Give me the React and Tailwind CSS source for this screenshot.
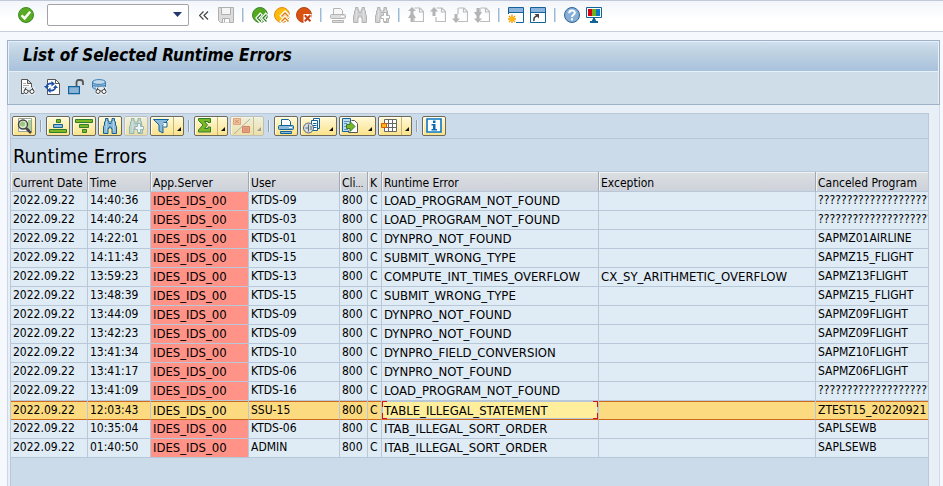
import React from "react";

function Svg({ children, className = "", w = 16 }) {
  return (
    <svg aria-hidden="true" width={w} height="16" viewBox={`0 0 ${w} 16`} fill="none" className={`shrink-0 ${className}`}>
      {children}
    </svg>
  );
}

/* ---------- system toolbar icons ---------- */
const Accept = () => (
  <Svg>
    <circle cx="8" cy="8" r="7.5" fill="#58ab22" stroke="#3d8a2a" />
    <path d="M3.6 8.2l3 3.2 5.6-6.6" stroke="#fff" strokeWidth="2.4" />
  </Svg>
);
const Save = () => (
  <Svg>
    <path d="M.5.5h15v15H2.5l-2-2z" fill="#dcdcdc" stroke="#b0b0b0" />
    <path d="M3.5.5h9v7h-9z" fill="#f4f4f4" stroke="#b0b0b0" />
    <path d="M4.500 15.500v-4h7v4" fill="#fff" stroke="#b0b0b0" />
    <path d="M6.500 12v3" stroke="#b0b0b0" />
  </Svg>
);
const Back = () => (
  <Svg>
    <circle cx="8" cy="8" r="7.5" fill="#55a81e" stroke="#3b8a34" />
    <path d="M9.5 6.5l-4 4.5 4 4.5M15 6.5L11 11l4 4.5" stroke="#fff" strokeWidth="3.6" />
    <path d="M9 7.500l-3.500 3.500L9 14.500M14.500 7.500L11 11l3.500 3.500" stroke="#2e7d32" strokeWidth="1.300" />
  </Svg>
);
const Exit = () => (
  <Svg>
    <circle cx="8" cy="8" r="7.5" fill="#fbbc0c" stroke="#e08a1c" />
    <path d="M6.500 10l4.500-4.500L15.500 10M6.500 15.500L11 11l4.500 4.500" stroke="#fff" strokeWidth="3.4" />
    <path d="M7.500 9.500L11 6l3.500 3.500M7.500 14.500L11 11l3.500 3.500" stroke="#d97a14" strokeWidth="1.4" />
  </Svg>
);
const Cancel = () => (
  <Svg>
    <circle cx="8" cy="8" r="7.500" fill="#d9530f" stroke="#b5451b" />
    <path d="M7.500 7h8v9h-8z" fill="#fff" />
    <path d="M8.800 8.300l5.600 6M14.400 8.300l-5.600 6" stroke="#c8401a" strokeWidth="2" />
  </Svg>
);
const Printer = ({ line = "#b4b4b4", body = "#dcdcdc", paper = "#f8f8f8" }) => (
  <Svg>
    <path d="M3.500 7V1.500h7l2 2V7" fill={paper} stroke={line} />
    <rect x=".5" y="7.500" width="15" height="4" rx="1" fill={body} stroke={line} />
    <path d="M11 9.500h3" stroke="#fff" />
    <path d="M2.500 13.500h11v2h-11z" fill={body} stroke={line} />
  </Svg>
);
const Binoculars = ({ line = "#b4b4b4", body = "#d2d2d2", plus }) => (
  <Svg>
    <path
      d="M3.500.5h2.500v2.500h1V5.500h2V3h1V.5h2.500V3l1 1v3l1 1.500v7H10v-5H9V9H7v1.500H6v5H1.500v-7L2.500 7V4l1-1z"
      fill={body}
      stroke={line}
    />
    <path d="M4.500 3v10M11.500 3v10" stroke="#fff" strokeOpacity=".35" />
    {plus && <path d="M9.500 5.500h3v3h3v3h-3v3h-3v-3h-2.500v-3h2.500z" fill="#fff" stroke={line} />}
  </Svg>
);
const Page = ({ first, up, down, last }) => (
  <Svg>
    <path d="M6.500 1H12l3.500 3.500V14.500H6M11.500 1v4h4" stroke="#bcbcbc" strokeWidth="1.200" />
    {(down || last) && <path d="M6 1v6" stroke="#bcbcbc" strokeWidth="1.200" />}
    {(up || first) && <path d="M6 10v5" stroke="#bcbcbc" strokeWidth="1.200" />}
    {up && <path d="M4 0l4 4.500H5.500V9h-3V4.500H0z" fill="#b4b4b4" />}
    {down && <path d="M4 16l4-4.500H5.500V7h-3v4.500H0z" fill="#b4b4b4" />}
    {first && <path d="M4 0l4 4H5.500v3L8 11H5.500v4h-3v-4H0l2.500-4V4H0z" fill="#b4b4b4" />}
    {last && <path d="M4 16l4-4.500H5.500V9L8 5H5.500V1h-3v4H0l2.500 4v2.500H0z" fill="#b4b4b4" />}
  </Svg>
);
const NewSession = () => (
  <Svg>
    <path d="M.5.5h15v15h-15z" fill="#fff" stroke="#11639a" strokeWidth="1" />
    <path d="M1 1h14v4H1z" fill="#8db4dc" />
    <path d="M0 5.500h16" stroke="#11639a" />
    <path d="M0 7h8v9H0z" fill="#fff" />
    <path d="M4 7.500v8.500M0 12h8M1 9l6 6M7 9l-6 6" stroke="#f59a00" strokeWidth="1.400" />
    <circle cx="4" cy="12" r="2.300" fill="#fcb813" />
  </Svg>
);
const Shortcut = () => (
  <Svg>
    <path d="M.5.5h15v15h-15z" fill="#fff" stroke="#11639a" />
    <path d="M1 1h14v4H1z" fill="#8db4dc" />
    <path d="M0 5.500h16" stroke="#11639a" />
    <path d="M4 14c-.5-3 .5-4.500 3-5" stroke="#444" strokeWidth="1.600" />
    <path d="M4.500 7H9v4.500z" fill="#444" />
  </Svg>
);
const Help = () => (
  <Svg>
    <circle cx="8" cy="8" r="7.500" fill="#86aed6" stroke="#2a6596" />
    <path d="M5.200 6.200c0-3.600 5.600-3.600 5.600-.4 0 2-2.800 2-2.800 4.200M8 11.300v2" stroke="#fff" strokeWidth="2" />
  </Svg>
);
const Monitor = () => (
  <Svg>
    <path d="M.5.500h15v10H.5z" fill="#fff" stroke="#11639a" />
    <path d="M2 2h4v7H2z" fill="#d5000f" />
    <path d="M6 2h4v7H6z" fill="#6fb01c" />
    <path d="M10 2h4v7h-4z" fill="#0a78c2" />
    <path d="M8 11v3M4 15h8M6 13.500h4" stroke="#11639a" strokeWidth="2" />
  </Svg>
);

/* ---------- application toolbar icons ---------- */
const Glasses = () => (
  <g>
    <path d="M4 8h11v8H4z" fill="#e4ecf3" />
    <circle cx="6" cy="12.500" r="2" stroke="#444" fill="#fff" />
    <circle cx="12" cy="12.500" r="2" stroke="#444" fill="#fff" />
    <path d="M8 12h2M4.500 11.500L6 8.500M13.500 11.500L12 8.500" stroke="#444" />
  </g>
);
const DocGlasses = () => (
  <Svg>
    <path d="M1.500 15V.5h6l4 4V8M7.500.5v4h4" fill="#fff" stroke="#555" />
    <path d="M1.500 14.500h3" stroke="#555" />
    <path d="M3 4.500h3M3 6.500h6M3 8.500h3" stroke="#aaa" />
    <Glasses />
  </Svg>
);
const Refresh = () => (
  <Svg>
    <path d="M3.500.5h8l4 4v11h-12z" fill="#fff" stroke="#555" />
    <path d="M11.500.5v4h4" stroke="#555" />
    <path d="M2.500 8c.3-3 3-4 6-3.500" stroke="#1c4fa8" strokeWidth="1.800" />
    <path d="M7.500 2L11 4.800 7.500 7.500z" fill="#1c4fa8" />
    <path d="M11.500 8c-.3 3-3 4-5.500 3.500" stroke="#1c4fa8" strokeWidth="1.800" />
    <path d="M6.500 8.500L3 11.300 6.500 14z" fill="#1c4fa8" />
    <path d="M0 7h5L2.500 10z" fill="#1c4fa8" />
    <path d="M9 9h5l-2.500-3z" fill="#1c4fa8" />
  </Svg>
);
const Unlock = () => (
  <Svg>
    <path d="M8.500 8V3.500c0-1.400.8-2.500 2-2.500h2c1.200 0 2.500 1 2.500 2.500V6" stroke="#555" strokeWidth="1.800" />
    <path d="M.6 7.600h10.800v7H.6z" fill="#8db4d8" stroke="#11639a" strokeWidth="1.200" />
  </Svg>
);
const DbGlasses = () => (
  <Svg>
    <path d="M.5 3v5c0 1.500 3 2.500 6.500 2.500S13.500 9.500 13.500 8V3" fill="#9dbfe0" stroke="#3a7db0" />
    <ellipse cx="7" cy="3" rx="6.500" ry="2.400" fill="#c3daee" stroke="#3a7db0" />
    <path d="M.5 6c1 1.500 12 1.500 13 0" stroke="#3a7db0" />
    <Glasses />
  </Svg>
);

/* ---------- grid toolbar icons ---------- */
const Detail = () => (
  <Svg w={18}>
    <path d="M3.500.5h13v13h-13z" fill="#fff" stroke="#98a398" />
    <path d="M13 3h3M13 5h3M13 7h3M13 9h3M13 11h3" stroke="#5da52a" />
    <circle cx="8" cy="6.500" r="4.500" fill="#d9e8c6" stroke="#444" strokeWidth="1.400" />
    <circle cx="7.500" cy="6" r="2.500" fill="#9bc47e" />
    <path d="M11 10l5 5" stroke="#444" strokeWidth="2.600" />
  </Svg>
);
const SortUp = () => (
  <Svg w={18}>
    <path d="M7.500 1.500h4v3h-4z" fill="#7cb824" stroke="#2e7d32" />
    <path d="M4.500 6.500h9v3h-9z" fill="#8cbad8" stroke="#11639a" />
    <path d="M.5 11.500h17v3H.5z" fill="#7cb824" stroke="#2e7d32" />
  </Svg>
);
const SortDown = () => (
  <Svg w={18}>
    <path d="M.5 1.500h17v3H.5z" fill="#7cb824" stroke="#2e7d32" />
    <path d="M4.500 6.500h9v3h-9z" fill="#7cb824" stroke="#2e7d32" />
    <path d="M7.500 11.500h4v3h-4z" fill="#7cb824" stroke="#2e7d32" />
  </Svg>
);
const Filter = () => (
  <Svg>
    <path d="M.5 1.500h15L10 7v8l-4-2V7z" fill="#8cbad8" stroke="#11639a" />
    <path d="M10.500 4.500h3.500v4.500h-3.500" fill="#fff" stroke="#11639a" />
  </Svg>
);
const Sum = () => (
  <Svg>
    <path d="M1.500.5h12v4h-2.500v-1H7.500l3 3.500-3 3.500H11v-1.500h2.500v5h-12v-2L6 7 1.500 2.500z" fill="#7cb824" stroke="#2e7d32" />
  </Svg>
);
const Subtotal = () => (
  <Svg w={18}>
    <path d="M.5.500h7v6h-7z" fill="#fbbd7c" stroke="#ee8a4a" />
    <path d="M9.500 8.500h7v6h-7z" fill="#f08a5c" stroke="#d9602c" />
    <path d="M2 2l4 3M6 2L2 5M11 10l4 3M15 10l-4 3" stroke="#e0703c" />
    <path d="M1 16L17 1" stroke="#a39c86" />
  </Svg>
);
const Views = () => (
  <Svg w={18}>
    <path d="M10.500.5h6v10h-6z" fill="#fff" stroke="#11639a" />
    <path d="M8.500 2.500h6v10h-6z" fill="#fff" stroke="#11639a" />
    <path d="M10 5.500h3.500M10 7.500h3.500M10 9.500h3.500" stroke="#11639a" />
    <circle cx="5.500" cy="10" r="5" fill="#d5dde2" stroke="#5a6672" />
    <path d="M5.500 6.500v7M2.500 10H5M8 8v4" stroke="#5a6672" />
  </Svg>
);
const Export = () => (
  <Svg>
    <path d="M.5.500h8v13h-8z" fill="#c4d9ec" stroke="#11639a" />
    <path d="M2 3.500h5M2 5.500h3M2 8.500h2M2 11.500h4" stroke="#5a94c0" />
    <path d="M9.500 2.500h3l3 3v9h-9v-2" fill="#fff" stroke="#555" />
    <path d="M4.500 6.500h3.500V3.500l5 5-5 5v-3H4.500z" fill="#7cb824" stroke="#2e7d32" />
  </Svg>
);
const Layout = () => (
  <Svg>
    <path d="M3.500 1.500h12v12h-12zM3.500 5.500h12M3.500 9.500h12M7.500 1.500v12M11.500 1.500v12" fill="#fff" stroke="#666" />
    <path d="M.5 5.500h5v4h-5z" fill="#fcb813" stroke="#e05a00" />
  </Svg>
);
const Info = () => (
  <Svg>
    <path d="M1 1h14v13H1z" fill="#fff" stroke="#0a78c2" strokeWidth="1.600" />
    <path d="M7 2.500h2.500V5H7zM5.500 6h4v5H11v1.500H5.500V11H7V7.500H5.500z" fill="#0a6db8" />
  </Svg>
);

/* ---------- controls ---------- */
function IconButton({ label, disabled, children }) {
  return (
    <button type="button" aria-label={label} disabled={disabled} className="flex h-4 w-4 shrink-0 items-center justify-center">
      {children}
    </button>
  );
}

const Divider = () => <span className="mx-[2px] h-[14px] w-[2px] shrink-0 border-l border-[#9dbbd6] bg-[#cddded]" />;
const GridDivider = () => <span className="mx-[2px] h-3 w-[2px] shrink-0 border-l border-[#93a0ae] bg-[#e4ecf4]" />;

const faces = {
  plain: "w-6 justify-center",
  split: "w-[34px] justify-between pl-[2px]",
  menu: "w-[37px] justify-between pl-[2px]",
};

function GridButton({ label, kind = "plain", disabled, children }) {
  return (
    <button
      type="button"
      aria-label={label}
      disabled={disabled}
      className={`flex h-5 shrink-0 items-center rounded-[2px] border bg-linear-to-b from-[#fff9d6] to-[#fbe28a] shadow-[inset_1px_1px_0_#fffdf0] ${faces[kind]} ${
        disabled ? "border-[#b9b6a4] opacity-70" : "border-[#6f6a58]"
      }`}
    >
      {children}
      {kind !== "plain" && (
        <span className={`flex h-full w-[10px] items-end justify-center pb-[4px] ${kind === "split" ? "border-l border-[#c2b67c]" : ""}`}>
          <svg aria-hidden="true" width="4" height="4" viewBox="0 0 4 4">
            <path d="M4 0v4H0z" fill={disabled ? "#8a8674" : "#111"} />
          </svg>
        </span>
      )}
    </button>
  );
}

/* ---------- data ---------- */
const unknown = "????????????????????";
const rows = [
  ["14:40:36", "KTDS-09", "LOAD_PROGRAM_NOT_FOUND", "", unknown],
  ["14:40:24", "KTDS-03", "LOAD_PROGRAM_NOT_FOUND", "", unknown],
  ["14:22:01", "KTDS-01", "DYNPRO_NOT_FOUND", "", "SAPMZ01AIRLINE"],
  ["14:11:43", "KTDS-15", "SUBMIT_WRONG_TYPE", "", "SAPMZ15_FLIGHT"],
  ["13:59:23", "KTDS-13", "COMPUTE_INT_TIMES_OVERFLOW", "CX_SY_ARITHMETIC_OVERFLOW", "SAPMZ13FLIGHT"],
  ["13:48:39", "KTDS-15", "SUBMIT_WRONG_TYPE", "", "SAPMZ15_FLIGHT"],
  ["13:44:09", "KTDS-09", "DYNPRO_NOT_FOUND", "", "SAPMZ09FLIGHT"],
  ["13:42:23", "KTDS-09", "DYNPRO_NOT_FOUND", "", "SAPMZ09FLIGHT"],
  ["13:41:34", "KTDS-10", "DYNPRO_FIELD_CONVERSION", "", "SAPMZ10FLIGHT"],
  ["13:41:17", "KTDS-06", "DYNPRO_NOT_FOUND", "", "SAPMZ06FLIGHT"],
  ["13:41:09", "KTDS-16", "LOAD_PROGRAM_NOT_FOUND", "", unknown],
  ["12:03:43", "SSU-15", "TABLE_ILLEGAL_STATEMENT", "", "ZTEST15_20220921"],
  ["10:35:04", "KTDS-06", "ITAB_ILLEGAL_SORT_ORDER", "", "SAPLSEWB"],
  ["01:40:50", "ADMIN", "ITAB_ILLEGAL_SORT_ORDER", "", "SAPLSEWB"],
];
const selected = 11;
const codeColumns = [2, 6, 7];
const heads = ["Current Date", "Time", "App.Server", "User", "Cli", "K", "Runtime Error", "Exception", "Canceled Program"];

function Corner({ className }) {
  return <span className={`absolute h-[6px] w-[5px] border-[#d8101c] ${className}`} />;
}

function Row({ row, active }) {
  const [time, user, error, exception, program] = row;
  const cells = ["2022.09.22", time, "IDES_IDS_00", user, "800", "C", error, exception, program];
  return (
    <tr className={active ? "bg-[#fcdb80]" : "bg-[#dfebf5]"}>
      {cells.map((text, i) => {
        const tone = i === 2 && !active ? "bg-[#ff9388]" : "";
        const focus = i === 6 && active;
        return (
          <td
            key={i}
            className={`h-[19px] overflow-hidden border-r border-b p-0 whitespace-nowrap last:border-r-0 ${tone} ${
              active ? "border-r-[#b9c8d8] border-b-[#cf6a1c] shadow-[inset_0_1px_0_#cf6a1c]" : "border-[#b9c8d8]"
            } ${focus ? "relative bg-[#ffef9c]" : ""}`}
          >
            <div
              className={`h-[18px] overflow-hidden pl-[2px] ${active ? "leading-[19px]" : "leading-[17px]"} ${
                codeColumns.includes(i) ? "text-[13px]" : ""
              }`}
            >
              {text}
            </div>
            {focus && (
              <>
                <span className="absolute inset-0 border border-[#b9c8d8]" />
                <Corner className="top-0 left-0 border-t border-l" />
                <Corner className="top-0 right-0 border-t border-r" />
                <Corner className="bottom-0 left-0 border-b border-l" />
                <Corner className="right-0 bottom-0 border-r border-b" />
              </>
            )}
          </td>
        );
      })}
    </tr>
  );
}

export default function App() {
  return (
    <div className="flex min-h-screen flex-col overflow-hidden bg-[#f5f8fc] font-['DejaVu_Sans_Condensed','DejaVu_Sans',sans-serif] text-[12px] text-black">
      <header className="flex h-8 items-center gap-[6px] border-t border-b border-t-[#c0c9d9] border-b-[#c8cddd] bg-linear-to-b from-[#f2f5fa] to-white to-60% pb-[2px] pl-[18px]">
        <IconButton label="Enter"><Accept /></IconButton>
        <div className="relative mr-[4px] ml-[7px] h-[22px] w-[142px] shrink-0">
          <input aria-label="Command" className="h-full w-full rounded-[2px] border border-[#a2a2a8] bg-white pr-5 pl-1 outline-none" />
          <svg aria-hidden="true" className="pointer-events-none absolute top-[8px] right-[7px]" width="9" height="5" viewBox="0 0 9 5">
            <path d="M0 0h9L4.500 5z" fill="#22376e" />
          </svg>
        </div>
        <button type="button" aria-label="Collapse" className="flex h-4 w-[13px] shrink-0 items-center">
          <svg aria-hidden="true" width="10" height="9" viewBox="0 0 10 9" fill="none">
            <path d="M4.500.5l-4 4 4 4M9 .5l-4 4 4 4" stroke="#444" strokeWidth="1.200" />
          </svg>
        </button>
        <IconButton label="Save" disabled><Save /></IconButton>
        <Divider />
        <IconButton label="Back"><Back /></IconButton>
        <IconButton label="Exit"><Exit /></IconButton>
        <IconButton label="Cancel"><Cancel /></IconButton>
        <Divider />
        <IconButton label="Print" disabled><Printer /></IconButton>
        <IconButton label="Find" disabled><Binoculars /></IconButton>
        <IconButton label="Find next" disabled><Binoculars plus /></IconButton>
        <Divider />
        <IconButton label="First page" disabled><Page first /></IconButton>
        <IconButton label="Previous page" disabled><Page up /></IconButton>
        <IconButton label="Next page" disabled><Page down /></IconButton>
        <IconButton label="Last page" disabled><Page last /></IconButton>
        <Divider />
        <IconButton label="New session"><NewSession /></IconButton>
        <IconButton label="Create shortcut"><Shortcut /></IconButton>
        <Divider />
        <IconButton label="Help"><Help /></IconButton>
        <IconButton label="Customize layout"><Monitor /></IconButton>
      </header>

      <main className="mt-2 mr-[3px] ml-[7px] flex flex-1 flex-col border-r border-l border-r-[#cfdaea] border-l-[#ccd8e6] bg-[#e9eff7]">
        <section className="-mx-px border border-[#9fb1c6] bg-[#cfdde8]">
          <div className="flex h-[31px] items-center border border-[#e6f0f9] bg-linear-to-b from-[#cfdfee] via-[#bdd1e1] via-40% to-[#a9c2dc] pl-[14px]">
            <h1 className="pb-[3px] text-[17px] leading-5 font-bold italic">List of Selected Runtime Errors</h1>
          </div>
          <div className="flex h-8 items-center gap-2 border-r border-l border-[#e6f0f9] pb-[2px] pl-[11px]">
            <IconButton label="Display"><DocGlasses /></IconButton>
            <IconButton label="Refresh"><Refresh /></IconButton>
            <IconButton label="Unlock"><Unlock /></IconButton>
            <IconButton label="Display database"><DbGlasses /></IconButton>
          </div>
        </section>

        <section className="mt-2 mr-[10px] ml-[2px] flex-1 overflow-hidden border-t border-r border-l border-[#b9c8d8] bg-[#cbdbe9]">
          <div className="flex h-[25px] items-center gap-[2px] border-b border-[#b9c8d8] pl-px">
            <GridButton label="Details"><Detail /></GridButton>
            <GridDivider />
            <GridButton label="Sort ascending"><SortUp /></GridButton>
            <GridButton label="Sort descending"><SortDown /></GridButton>
            <GridButton label="Find"><Binoculars line="#11639a" body="#8cbad8" /></GridButton>
            <GridButton label="Find next" disabled><Binoculars line="#7fa594" body="#bcd3c4" plus /></GridButton>
            <GridButton label="Filter" kind="split"><Filter /></GridButton>
            <GridDivider />
            <GridButton label="Total" kind="split"><Sum /></GridButton>
            <GridButton label="Subtotals" kind="split" disabled><Subtotal /></GridButton>
            <GridDivider />
            <GridButton label="Print"><Printer line="#11639a" body="#8cbad8" paper="#fff" /></GridButton>
            <GridButton label="Views" kind="menu"><Views /></GridButton>
            <GridButton label="Export" kind="menu"><Export /></GridButton>
            <GridButton label="Choose layout" kind="split"><Layout /></GridButton>
            <GridDivider />
            <GridButton label="Information"><Info /></GridButton>
          </div>
          <h2 className="h-[33px] border-b border-[#b9c8d8] pl-[2px] text-[20px] leading-[34px]">Runtime Errors</h2>
          <table className="w-full table-fixed border-separate border-spacing-0">
            <colgroup>
              <col className="w-[77px]" />
              <col className="w-[63px]" />
              <col className="w-[98px]" />
              <col className="w-[91px]" />
              <col className="w-[28px]" />
              <col className="w-[14px]" />
              <col className="w-[217px]" />
              <col className="w-[217px]" />
              <col />
            </colgroup>
            <thead>
              <tr className="bg-linear-to-b from-[#dcdfe1] to-[#cdd1da]">
                {heads.map((h, i) => (
                  <th key={h} scope="col" className="h-5 overflow-hidden border-r border-b border-r-[#9fa9b6] border-b-[#b9c8d8] p-0 text-left font-normal whitespace-nowrap shadow-[inset_1px_1px_0_#f0f3f5] last:border-r-0">
                    <div className="h-[19px] overflow-hidden pl-[2px] leading-[22px]">
                      {h}
                      {i === 4 && <span className="text-[9px]">...</span>}
                    </div>
                  </th>
                ))}
              </tr>
            </thead>
            <tbody>
              {rows.map((row, i) => (
                <Row key={i} row={row} active={i === selected} />
              ))}
            </tbody>
          </table>
        </section>
      </main>
    </div>
  );
}
